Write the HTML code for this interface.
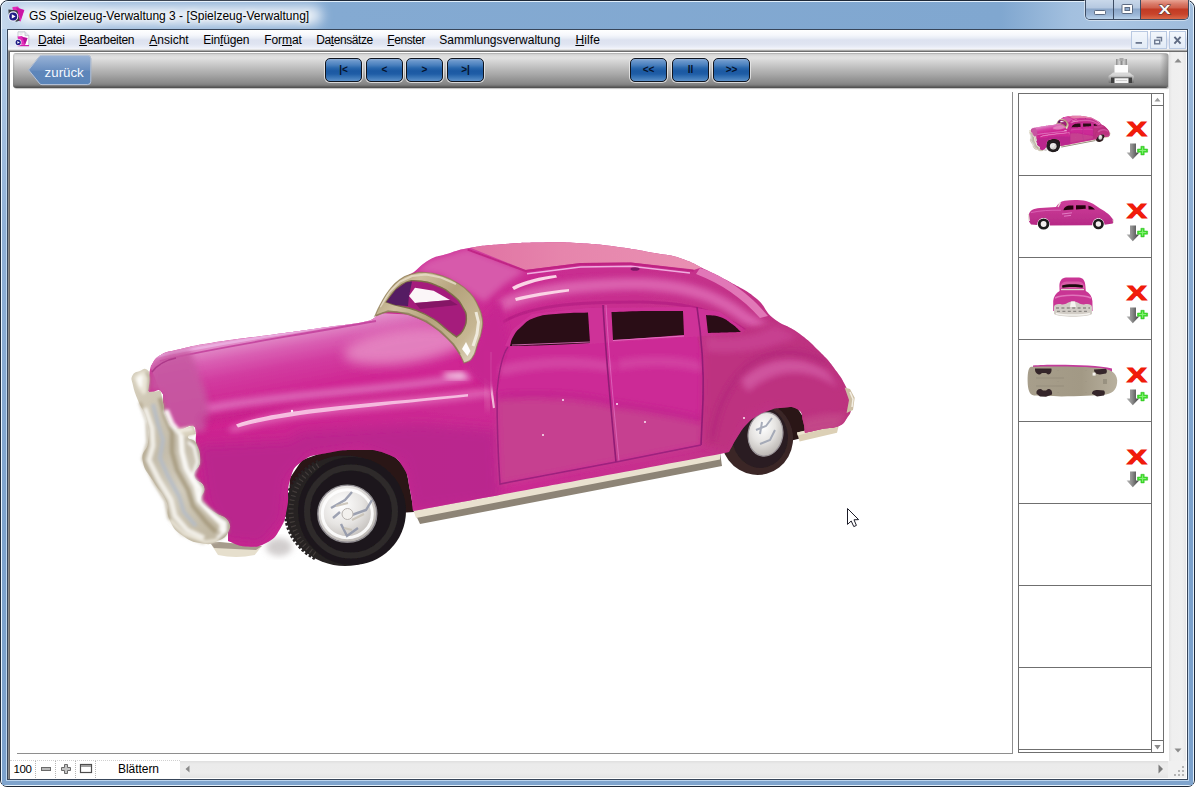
<!DOCTYPE html>
<html lang="de">
<head>
<meta charset="utf-8">
<title>GS Spielzeug-Verwaltung 3 - [Spielzeug-Verwaltung]</title>
<style>
html,body{margin:0;padding:0;}
body{width:1195px;height:787px;overflow:hidden;background:#fff;font-family:"Liberation Sans",sans-serif;font-size:12px;color:#000;position:relative;}
.a{position:absolute;box-sizing:border-box;}
/* ---------- window frame (page coordinates everywhere) ---------- */
#win{left:0;top:0;width:1195px;height:787px;border:1px solid #1d2838;border-radius:8px 8px 7px 7px;
 background:linear-gradient(90deg,#c6d9ed 0px,#adc7e3 30px,#93b4d9 110px,#84aad2 330px,#80a7d0 1000px,#a3c0df 1070px,#a8c4e2 1110px,#9fbcdc 1195px);}
#winhl{left:1px;top:1px;width:1193px;height:785px;border:1px solid rgba(235,246,255,.9);border-radius:7px 7px 6px 6px;}
#sideL{left:2px;top:29px;width:4px;height:752px;background:linear-gradient(180deg,#b4cde8,#8fb0d6 200px,#7da3cd 500px,#7ba1cc);}
#sideR{left:1189px;top:29px;width:4px;height:752px;background:linear-gradient(180deg,#9ebbdc,#86a9d1 250px,#7ba1cc 500px);}
#bottomF{left:2px;top:781px;width:1191px;height:4px;background:#7fa4cd;}
#hlL{left:6px;top:29px;width:1px;height:752px;background:#c0d8f0;}
#hlR{left:1188px;top:29px;width:1px;height:752px;background:#c0d8f0;}
#hlB{left:6px;top:780px;width:1183px;height:1px;background:#bcd5ee;}
#title{left:29px;top:7.5px;height:16px;line-height:16px;font-size:12px;white-space:nowrap;color:#000;
 text-shadow:0 0 4px rgba(255,255,255,.9),0 0 8px rgba(255,255,255,.7);}
#glow{left:16px;top:6px;width:306px;height:19px;border-radius:9px;background:rgba(255,255,255,.82);filter:blur(6px);}
/* caption buttons */
#cap{left:1085px;top:0;width:104px;height:20px;border:1px solid #3d4c63;border-top:none;border-radius:0 0 5px 5px;overflow:hidden;
 box-shadow:0 0 0 1px rgba(255,255,255,.45);}
#cap div{position:absolute;top:0;height:19px;box-sizing:border-box;}
#cmin{left:0;width:28px;border-right:1px solid #3d4c63;background:linear-gradient(180deg,#c9d8ea 0,#b5c8e0 8px,#8ba6c8 9px,#9db8d8 15px,#b9d2ea 19px);}
#cmax{left:28px;width:27px;border-right:1px solid #3d4c63;background:linear-gradient(180deg,#c9d8ea 0,#b5c8e0 8px,#8ba6c8 9px,#9db8d8 15px,#b9d2ea 19px);}
#ccls{left:55px;width:47px;background:linear-gradient(180deg,#e8a494 0,#d97a68 4px,#cf5f4b 8px,#c13a24 9px,#c8432a 14px,#d9694a 19px);}
/* client */
#client{left:7px;top:29px;width:1181px;height:751px;border:1px solid #38465a;background:#fff;}
#menubar{left:8px;top:30px;width:1179px;height:19px;background:linear-gradient(180deg,#ffffff 0px,#f6f8fc 5px,#e9edf6 8px,#dde2f0 10px,#dfe4f1 14px,#e9edf7 17px,#f4f6fb 19px);}
.mi{position:absolute;top:33px;height:15px;line-height:15px;font-size:12px;white-space:nowrap;color:#000;}
.mi u{text-decoration:underline;text-decoration-thickness:1px;text-underline-offset:1px;}
.mdib{position:absolute;top:31px;width:17px;height:18px;box-sizing:border-box;border:1px solid #b9c9e2;background:linear-gradient(180deg,#f3f7fc,#e2ebf7);}
/* mdi child sunken edge */
#l49{left:8px;top:49px;width:1179px;height:1px;background:#e3e3e3;}
#l50{left:8px;top:50px;width:1179px;height:1px;background:#a9a9a9;}
#l51{left:8px;top:51px;width:1179px;height:1px;background:#6d6d6d;}
#v8{left:8px;top:51px;width:1px;height:728px;background:#8c8c8c;}
#v9{left:9px;top:52px;width:1px;height:727px;background:#6d6d6d;}
/* toolbar */
#tb{left:13px;top:53px;width:1155px;height:35px;border-radius:3px 2px 2px 3px;
 background:linear-gradient(180deg,#9c9c9c 0px,#cfcfcf 1px,#dedede 3px,#e1e1e1 5px,#d2d2d2 9px,#bdbdbd 15px,#a9a9a9 21px,#979797 26px,#8a8a8a 30px,#7e7e7e 32px,#626262 33.5px,#4a4a4a 35px);
 box-shadow:1px 1px 1px rgba(0,0,0,.25);}
#tbl{left:13px;top:54px;width:12px;height:32px;background:linear-gradient(90deg,rgba(120,120,120,.35),rgba(200,200,200,.0) 2px);border-radius:3px 0 0 3px;}
#tbr{left:1160px;top:54px;width:8px;height:33px;background:linear-gradient(90deg,rgba(120,120,120,0),rgba(110,110,110,.55));}
.nb{position:absolute;top:58px;width:37px;height:24px;box-sizing:border-box;border:1px solid #10151f;border-radius:5px;
 background:linear-gradient(180deg,#8aabd4 0px,#6a97cc 2px,#4a80be 6px,#2a68ad 9px,#1b59a3 12px,#1f5da6 15px,#3f7aba 19px,#5d90c8 22px,#6a9ad0 24px);
 box-shadow:0 0 0 1px rgba(235,235,235,.8);color:#06122a;font-weight:bold;font-size:10px;text-align:center;line-height:21px;letter-spacing:0;}
</style>
</head>
<body>
<div id="win" class="a"></div><div id="winhl" class="a"></div>
<div id="sideL" class="a"></div><div id="sideR" class="a"></div><div id="bottomF" class="a"></div><div id="hlL" class="a"></div><div id="hlR" class="a"></div><div id="hlB" class="a"></div>
<div id="glow" class="a"></div>
<div id="title" class="a">GS Spielzeug-Verwaltung 3 - [Spielzeug-Verwaltung]</div>
<div id="cap" class="a"><div id="cmin"></div><div id="cmax"></div><div id="ccls"></div></div>
<div id="client" class="a"></div>
<div id="menubar" class="a"></div>
<span class="mi" style="left:38px;letter-spacing:-.28px"><u>D</u>atei</span>
<span class="mi" style="left:79.2px;letter-spacing:-.3px"><u>B</u>earbeiten</span>
<span class="mi" style="left:149.3px"><u>A</u>nsicht</span>
<span class="mi" style="left:203.2px;letter-spacing:-.17px">Ein<u>f</u>ügen</span>
<span class="mi" style="left:264.2px;letter-spacing:-.05px">For<u>m</u>at</span>
<span class="mi" style="left:316.3px;letter-spacing:-.42px">Da<u>t</u>ensätze</span>
<span class="mi" style="left:387.3px;letter-spacing:-.43px"><u>F</u>enster</span>
<span class="mi" style="left:439.3px;letter-spacing:-.02px">Sammlungsverwaltung</span>
<span class="mi" style="left:575.4px;letter-spacing:.12px"><u>H</u>ilfe</span>
<div class="mdib" style="left:1131px"></div><div class="mdib" style="left:1150px"></div><div class="mdib" style="left:1169px"></div>
<div id="l49" class="a"></div><div id="l50" class="a"></div><div id="l51" class="a"></div><div id="v8" class="a"></div><div id="v9" class="a"></div>
<div id="tb" class="a"></div><div id="tbl" class="a"></div><div id="tbr" class="a"></div>
<div class="nb" style="left:325px">|&lt;</div><div class="nb" style="left:366px">&lt;</div><div class="nb" style="left:406px">&gt;</div><div class="nb" style="left:447px">&gt;|</div>
<div class="nb" style="left:630px">&lt;&lt;</div><div class="nb" style="left:672px">ll</div><div class="nb" style="left:713px">&gt;&gt;</div>
<!-- zurück button -->
<svg class="a" style="left:24px;top:52px" width="74" height="38" viewBox="24 52 74 38">
 <defs>
  <linearGradient id="zg" x1="0" y1="0" x2="0" y2="1">
   <stop offset="0" stop-color="#9ab3d6"/><stop offset=".18" stop-color="#88a6cf"/><stop offset=".5" stop-color="#6a8fc0"/><stop offset=".55" stop-color="#5e86ba"/><stop offset="1" stop-color="#5a84b8"/>
  </linearGradient>
 </defs>
 <path d="M28.6 69.9 L39.6 56.3 Q40.6 55.4 42 55.4 L87.6 55.4 Q90.8 55.4 90.8 58.6 L90.8 81.4 Q90.8 84.6 87.6 84.6 L42 84.6 Q40.6 84.6 39.6 83.6 Z" fill="url(#zg)" stroke="#7d93b3" stroke-width="1"/>
 <path d="M28.6 69.9 L39.6 56.3 Q40.6 55.4 42 55.4 L87.6 55.4 Q90.8 55.4 90.8 58.6 L90.8 81.4 Q90.8 84.6 87.6 84.6 L42 84.6 Q40.6 84.6 39.6 83.6 Z" fill="none" stroke="rgba(230,235,245,.55)" stroke-width="1" transform="translate(0,0)" style="filter:blur(.6px)"/>
 <text x="44.6" y="76.9" font-family="Liberation Sans, sans-serif" font-size="13.3" fill="#f4f8ff">zurück</text>
</svg>
<!-- printer icon -->
<svg class="a" style="left:1106px;top:56px" width="32" height="30" viewBox="1106 56 32 30">
 <defs>
  <linearGradient id="pg1" x1="0" y1="0" x2="0" y2="1"><stop offset="0" stop-color="#c9c9c9"/><stop offset="1" stop-color="#6f6f6f"/></linearGradient>
  <linearGradient id="pg2" x1="0" y1="0" x2="1" y2="0"><stop offset="0" stop-color="#8d8d8d"/><stop offset=".3" stop-color="#d6d6d6"/><stop offset=".5" stop-color="#8d8d8d"/><stop offset=".7" stop-color="#d0d0d0"/><stop offset="1" stop-color="#8a8a8a"/></linearGradient>
 </defs>
 <rect x="1116" y="59" width="11" height="8" fill="url(#pg2)"/>
 <rect x="1119.5" y="58" width="4" height="3" fill="#a8a8a8"/>
 <rect x="1114.5" y="65" width="13.5" height="8" fill="#fdfdfd"/>
 <path d="M1113 72.5 L1129.5 72.5 L1133.5 76 L1109 76 Z" fill="#d8d8d8"/>
 <rect x="1108.5" y="75.5" width="25.5" height="7.5" rx="1" fill="url(#pg1)"/>
 <rect x="1111" y="77.5" width="21" height="5.5" fill="#3e3e3e"/>
 <rect x="1114.5" y="78.2" width="14" height="4.8" fill="#f4f4f4"/>
 <rect x="1116" y="80" width="11" height="1" fill="#cfcfcf"/>
</svg>

<!-- content area separators -->
<div class="a" style="left:1012px;top:92px;width:1px;height:662px;background:#8e8e8e"></div>
<div class="a" style="left:17px;top:753px;width:996px;height:1px;background:#8e8e8e"></div>
<!-- outer vertical scrollbar -->
<div class="a" style="left:1169px;top:52px;width:17px;height:709px;background:linear-gradient(90deg,#e4e4e4,#efefef 3px,#f0f0f0 13px,#e6e6e6)"></div>
<svg class="a" style="left:1169px;top:52px" width="18" height="709" viewBox="0 0 18 709">
 <path d="M5.5 10.5 L9 6.5 L12.5 10.5 Z" fill="#8c8c8c"/>
 <path d="M5.5 696.5 L9 700.5 L12.5 696.5 Z" fill="#8c8c8c"/>
</svg>
<!-- right thumbnail panel -->
<div class="a" style="left:1018px;top:93px;width:146px;height:660px;border:1px solid #6f6f6f;background:#fff"></div>
<div class="a" style="left:1151px;top:94px;width:1px;height:658px;background:#6f6f6f"></div>
<div class="a" style="left:1152px;top:105px;width:11px;height:1px;background:#6f6f6f"></div>
<div class="a" style="left:1152px;top:740px;width:11px;height:1px;background:#6f6f6f"></div>
<svg class="a" style="left:1152px;top:94px" width="11" height="658" viewBox="0 0 11 658">
 <path d="M2.5 7.5 L5.5 3.8 L8.5 7.5 Z" fill="#9a9a9a"/>
 <path d="M2.3 651 L5.5 655.5 L8.7 651 Z" fill="#8a8a8a"/>
</svg>
<div class="a" style="left:1019px;top:175px;width:132px;height:1px;background:#6f6f6f"></div>
<div class="a" style="left:1019px;top:257px;width:132px;height:1px;background:#6f6f6f"></div>
<div class="a" style="left:1019px;top:339px;width:132px;height:1px;background:#6f6f6f"></div>
<div class="a" style="left:1019px;top:421px;width:132px;height:1px;background:#6f6f6f"></div>
<div class="a" style="left:1019px;top:503px;width:132px;height:1px;background:#6f6f6f"></div>
<div class="a" style="left:1019px;top:585px;width:132px;height:1px;background:#6f6f6f"></div>
<div class="a" style="left:1019px;top:667px;width:132px;height:1px;background:#6f6f6f"></div>
<div class="a" style="left:1019px;top:749px;width:132px;height:1px;background:#6f6f6f"></div>
<!-- status bar -->
<div class="a" style="left:10px;top:761px;width:170px;height:17px;background:#fff"></div>
<div class="a" style="left:35px;top:761px;width:0;height:17px;border-left:1px dotted #b5b5b5"></div>
<div class="a" style="left:55px;top:761px;width:0;height:17px;border-left:1px dotted #b5b5b5"></div>
<div class="a" style="left:75px;top:761px;width:0;height:17px;border-left:1px dotted #b5b5b5"></div>
<div class="a" style="left:95px;top:761px;width:0;height:17px;border-left:1px dotted #b5b5b5"></div>
<div class="a" style="left:10px;top:760px;width:170px;height:0;border-top:1px dotted #d0d0d0"></div>
<span class="a" style="left:13.4px;top:762px;height:15px;line-height:15px;font-size:11.5px;letter-spacing:-.3px">100</span>
<span class="a" style="left:118px;top:762px;height:15px;line-height:15px;font-size:12px;letter-spacing:-.05px;white-space:nowrap">Blättern</span>
<svg class="a" style="left:36px;top:761px" width="60" height="17" viewBox="36 761 60 17">
 <rect x="41.5" y="767.5" width="9" height="3" fill="#b9b9b9" stroke="#6a6a6a" stroke-width="1"/>
 <path d="M64.5 764.5 h3 v3 h3 v3 h-3 v3 h-3 v-3 h-3 v-3 h3 z" fill="#c4c4c4" stroke="#6a6a6a" stroke-width="1"/>
 <rect x="80.5" y="764.5" width="11" height="8" fill="#fff" stroke="#4c4c4c" stroke-width="1.2"/>
 <rect x="81" y="765" width="10" height="2" fill="#a0a0a0"/>
</svg>
<!-- horizontal scrollbar -->
<div class="a" style="left:180px;top:761px;width:988px;height:17px;background:linear-gradient(180deg,#dfdfdf,#ebebeb 3px,#ececec 12px,#e4e4e4)"></div>
<svg class="a" style="left:180px;top:761px" width="988" height="17" viewBox="0 0 988 17">
 <path d="M9.5 4.5 L5.5 8 L9.5 11.5 Z" fill="#8a8a8a"/>
 <path d="M978.5 3.5 L983 8 L978.5 12.5 Z" fill="#7a7a7a"/>
</svg>
<!-- size grip -->
<div class="a" style="left:1168px;top:761px;width:18px;height:17px;background:#f0f0f0"></div>
<svg class="a" style="left:1168px;top:761px" width="19" height="17" viewBox="0 0 19 17">
 <g fill="#b4b4b4"><rect x="14" y="5" width="2" height="2"/><rect x="14" y="9" width="2" height="2"/><rect x="10" y="9" width="2" height="2"/><rect x="14" y="13" width="2" height="2"/><rect x="10" y="13" width="2" height="2"/><rect x="6" y="13" width="2" height="2"/></g>
</svg>

<svg class="a" style="left:10px;top:88px" width="1002" height="665" viewBox="10 88 1002 665">
<defs>
<linearGradient id="bodyG" gradientUnits="userSpaceOnUse" x1="150" y1="0" x2="850" y2="0"><stop offset="0" stop-color="#cd2390"/><stop offset=".45" stop-color="#cc2a94"/><stop offset=".75" stop-color="#c6308d"/><stop offset="1" stop-color="#bb357e"/></linearGradient>
<linearGradient id="hoodG" gradientUnits="userSpaceOnUse" x1="300" y1="326" x2="316" y2="412"><stop offset="0" stop-color="#e5a0d2"/><stop offset=".07" stop-color="#e188c6"/><stop offset=".22" stop-color="#d95eb2"/><stop offset=".42" stop-color="#d23ca0"/><stop offset=".7" stop-color="#cf2894"/><stop offset="1" stop-color="#d02290"/></linearGradient>
<linearGradient id="roofG" gradientUnits="userSpaceOnUse" x1="470" y1="0" x2="700" y2="0"><stop offset="0" stop-color="#e072a3"/><stop offset=".4" stop-color="#e685ac"/><stop offset="1" stop-color="#e990b2"/></linearGradient>
<linearGradient id="chromeG" gradientUnits="userSpaceOnUse" x1="130" y1="380" x2="225" y2="520"><stop offset="0" stop-color="#d6cfbd"/><stop offset=".2" stop-color="#cfc7b4"/><stop offset=".45" stop-color="#c4bcaa"/><stop offset=".7" stop-color="#d2ccbd"/><stop offset="1" stop-color="#c2b9a4"/></linearGradient>
<radialGradient id="hubG" cx=".4" cy=".35" r=".7"><stop offset="0" stop-color="#ffffff"/><stop offset=".5" stop-color="#e6e4e2"/><stop offset="1" stop-color="#b7b2ae"/></radialGradient>
<clipPath id="bodyClip"><path d="M151.0 366.0 C153.6 362.7 153.6 359.5 159.0 356.0 C166.6 351.1 167.2 352.1 176.0 350.0 C196.3 345.2 197.9 345.0 220.0 341.5 C244.9 337.5 245.0 338.4 270.0 335.0 C295.0 331.6 295.0 331.6 320.0 328.0 C344.0 324.6 348.7 325.3 368.0 321.0 C373.7 319.7 374.7 317.0 378.0 315.0 C381.0 308.4 380.7 304.0 387.0 295.0 C393.5 285.7 394.4 286.3 403.0 279.0 C408.0 274.8 410.4 274.3 414.0 272.0 C419.3 267.9 421.2 264.6 430.0 259.6 C436.9 255.7 437.4 256.9 445.0 254.6 C456.3 251.2 456.1 250.3 467.7 248.3 C486.2 245.0 486.3 245.4 505.0 244.0 C524.0 242.5 524.0 242.7 543.0 242.5 C561.8 242.3 561.8 242.2 580.6 243.3 C599.4 244.4 599.4 244.5 618.0 247.0 C637.1 249.5 637.0 249.9 656.0 253.3 C668.6 255.6 668.9 254.4 681.0 258.4 C694.0 262.7 693.6 263.7 706.0 269.7 C718.1 275.6 718.3 275.3 730.0 282.0 C743.8 289.9 744.8 288.8 757.0 299.0 C766.5 307.0 763.4 310.1 773.0 318.0 C783.7 326.8 785.7 323.9 797.0 332.0 C809.3 340.9 809.2 341.2 820.0 352.0 C829.3 361.3 829.3 361.4 837.0 372.0 C842.8 380.0 842.7 380.3 847.0 389.0 C849.1 393.2 849.1 393.3 850.0 398.0 C851.1 403.9 851.9 404.0 851.0 410.0 C850.3 414.4 849.6 414.4 847.0 418.0 C844.0 422.2 844.7 423.4 840.0 425.5 C831.7 429.2 831.0 427.1 822.0 429.0 C813.5 430.8 810.6 431.7 805.0 433.0 C804.3 429.0 804.7 426.8 803.0 421.0 C801.2 415.0 803.5 412.6 798.0 409.5 C790.3 405.2 789.0 407.5 780.0 408.0 C773.8 408.3 773.8 409.0 768.0 411.0 C762.3 413.0 762.1 412.8 757.0 416.0 C751.6 419.4 751.4 419.4 747.0 424.0 C741.8 429.4 742.1 429.7 738.0 436.0 C733.0 443.7 732.0 446.7 729.0 452.0 C726.0 452.7 723.0 453.3 720.0 454.0 C685.7 460.4 668.0 463.8 616.0 473.5 C567.0 482.6 567.0 482.4 518.0 491.5 C465.5 501.2 447.6 504.6 413.0 511.0 C412.0 504.1 412.4 500.3 410.0 490.0 C407.3 478.3 409.5 477.1 403.0 467.0 C397.5 458.3 396.6 457.8 387.0 454.0 C374.3 449.0 373.6 450.2 360.0 450.0 C343.4 449.7 343.2 449.7 327.0 453.0 C313.5 455.7 312.1 453.9 301.0 462.0 C292.5 468.2 293.1 469.9 290.0 480.0 C285.9 493.5 289.8 494.2 287.0 508.0 C284.8 518.8 285.7 519.5 280.0 529.0 C274.9 537.5 274.8 538.5 266.0 543.0 C257.0 547.6 256.1 547.0 246.0 546.5 C236.6 546.0 233.9 542.8 228.0 541.0 C228.0 538.0 228.0 536.5 228.0 532.0 C228.0 526.5 231.1 525.5 228.0 521.0 C223.7 514.7 221.1 517.5 215.0 513.0 C207.6 507.5 204.6 509.5 201.0 501.0 C198.2 494.4 205.9 493.9 204.0 487.0 C202.0 479.8 195.2 483.3 194.0 476.0 C192.8 468.5 199.5 469.6 200.0 462.0 C200.6 452.3 197.3 452.3 196.0 443.0 C195.4 438.5 196.0 437.0 196.0 434.0 C195.0 431.4 197.1 427.1 193.0 426.0 C186.3 424.2 183.9 431.9 176.0 428.5 C167.6 424.9 169.1 422.1 165.0 414.0 C162.7 409.5 164.5 409.0 163.5 404.0 C162.2 397.5 165.3 395.0 160.5 391.0 C156.1 387.3 152.7 396.5 149.0 392.0 C145.2 387.3 148.4 384.5 149.0 377.0 C149.4 371.4 150.3 369.6 151.0 366.0Z"/></clipPath>
<filter id="b1" x="-5%" y="-5%" width="110%" height="110%"><feGaussianBlur stdDeviation="0.7"/></filter>
<filter id="b2" x="-10%" y="-10%" width="120%" height="120%"><feGaussianBlur stdDeviation="1.5"/></filter>
<filter id="b3" x="-20%" y="-20%" width="140%" height="140%"><feGaussianBlur stdDeviation="3"/></filter>
<filter id="b6" x="-30%" y="-30%" width="160%" height="160%"><feGaussianBlur stdDeviation="6"/></filter>
<filter id="b10" x="-40%" y="-40%" width="180%" height="180%"><feGaussianBlur stdDeviation="10"/></filter>
</defs>
<g id="car" filter="url(#b1)">
<path d="M288 520 L290 478 L302 460 L330 450 L362 448 L390 452 L406 468 L414 512 Z" fill="#2a1418"/>
<path d="M728 456 L738 432 L750 416 L770 406 L796 406 L805 420 L806 437 Z" fill="#2a1418"/>
<path d="M413 509 L720 452 L722 466 L420 524 Z" fill="#8d8476"/>
<path d="M413 509 L720 452 L720 459.5 L416 518 Z" fill="#e9e1cf"/>
<path d="M797 432.6 L839.6 422.4 L837 432.8 L799.6 441.4 Z" fill="#dcd0b6"/>
<path d="M797 432.6 L839.6 422.4 L839 425 L797.6 435.4 Z" fill="#ece4d0"/>
<path d="M209 541 L218 555 Q236 559 254.7 555 L262 546 Z" fill="#e6dfcd"/>
<path d="M209 541 L262 546 L256 550 L214 548 Z" fill="#8a7d70" opacity=".7"/>
<ellipse cx="757" cy="438" rx="36" ry="37" fill="#3a2828" transform="rotate(-15 757 438)"/>
<ellipse cx="760" cy="437" rx="28" ry="31" fill="#2c1e20" transform="rotate(-5 760 437)"/>
<ellipse cx="765.5" cy="434.2" rx="17.3" ry="22" fill="url(#hubG)" transform="rotate(10 765.5 434.2)"/>
<ellipse cx="765.5" cy="434.2" rx="17.3" ry="22" fill="none" stroke="#9a949a" stroke-width="1.2" transform="rotate(10 765.5 434.2)"/>
<path d="M756 430 L766 426 L772 418 M760 444 L770 440 L775 430 M762 422 L760 434" stroke="#9aa0b0" stroke-width="2" fill="none" opacity=".85" filter="url(#b1)"/>
<ellipse cx="279" cy="547" rx="13" ry="9" fill="#a39b9b" filter="url(#b3)" opacity=".5"/>
<ellipse cx="345" cy="510.7" rx="59.5" ry="55.2" fill="#262123"/>
<path d="M315.2 558.3 L310.7 555.6 L306.4 552.6 L302.5 549.2 L298.9 545.4 L295.6 541.4 L292.8 537.2 L290.5 532.7 L288.5 528.0 L287.1 523.2 L286.1 518.3 L285.6 513.3 L285.6 508.3 L286.0 503.3 L287.0 498.4 L288.5 493.6 L290.4 488.9 L292.7 484.4 L295.5 480.1 L298.7 476.1 L302.3 472.4 L306.3 469.0 L310.5 465.9 L315.1 463.2 L319.9 460.9" stroke="#262123" stroke-width="4" stroke-dasharray="2.6 1.8" fill="none"/>
<path d="M314.9 554.1 L311.2 551.4 L307.7 548.4 L304.5 545.2 L301.6 541.7 L299.0 538.0 L296.8 534.1 L294.9 530.1 L293.4 525.9 L292.2 521.6 L291.4 517.2 L291.0 512.8 L291.1 508.4 L291.5 504.0 L292.2 499.6 L293.4 495.3 L295.0 491.1 L296.9 487.1 L299.1 483.2 L301.7 479.5 L304.6 476.0 L307.8 472.8 L311.3 469.9 L315.0 467.2 L319.0 464.8" stroke="#48423f" stroke-width="5" stroke-dasharray="1.2 3.2" fill="none" opacity=".8"/>
<ellipse cx="352" cy="511" rx="54" ry="54" fill="#1d191b"/>
<ellipse cx="351" cy="511.5" rx="44" ry="44" fill="none" stroke="#343032" stroke-width="6" opacity=".7" filter="url(#b1)"/>
<ellipse cx="347.3" cy="513.7" rx="29.5" ry="28.6" fill="url(#hubG)"/>
<ellipse cx="347.3" cy="513.7" rx="29.5" ry="28.6" fill="none" stroke="#8e8a90" stroke-width="1.4"/>
<ellipse cx="347.3" cy="513.7" rx="25" ry="24" fill="none" stroke="#ffffff" stroke-width="3" opacity=".9" filter="url(#b1)"/>
<path d="M331 508 L345 500 L352 492 M349 516 L366 510 L372 500 M341 524 L347 536 L358 528 M333 518 L340 512" stroke="#8f95a8" stroke-width="2.4" fill="none" opacity=".85" filter="url(#b1)"/>
<path d="M336 506 L348 503 M352 520 L364 514 M344 528 L352 530" stroke="#c9c2b6" stroke-width="2" fill="none" opacity=".9"/>
<circle cx="347.5" cy="514" r="5.5" fill="#f3f1ee" stroke="#b9b4b0" stroke-width="1"/>
<path d="M151.0 366.0 C153.6 362.7 153.6 359.5 159.0 356.0 C166.6 351.1 167.2 352.1 176.0 350.0 C196.3 345.2 197.9 345.0 220.0 341.5 C244.9 337.5 245.0 338.4 270.0 335.0 C295.0 331.6 295.0 331.6 320.0 328.0 C344.0 324.6 348.7 325.3 368.0 321.0 C373.7 319.7 374.7 317.0 378.0 315.0 C381.0 308.4 380.7 304.0 387.0 295.0 C393.5 285.7 394.4 286.3 403.0 279.0 C408.0 274.8 410.4 274.3 414.0 272.0 C419.3 267.9 421.2 264.6 430.0 259.6 C436.9 255.7 437.4 256.9 445.0 254.6 C456.3 251.2 456.1 250.3 467.7 248.3 C486.2 245.0 486.3 245.4 505.0 244.0 C524.0 242.5 524.0 242.7 543.0 242.5 C561.8 242.3 561.8 242.2 580.6 243.3 C599.4 244.4 599.4 244.5 618.0 247.0 C637.1 249.5 637.0 249.9 656.0 253.3 C668.6 255.6 668.9 254.4 681.0 258.4 C694.0 262.7 693.6 263.7 706.0 269.7 C718.1 275.6 718.3 275.3 730.0 282.0 C743.8 289.9 744.8 288.8 757.0 299.0 C766.5 307.0 763.4 310.1 773.0 318.0 C783.7 326.8 785.7 323.9 797.0 332.0 C809.3 340.9 809.2 341.2 820.0 352.0 C829.3 361.3 829.3 361.4 837.0 372.0 C842.8 380.0 842.7 380.3 847.0 389.0 C849.1 393.2 849.1 393.3 850.0 398.0 C851.1 403.9 851.9 404.0 851.0 410.0 C850.3 414.4 849.6 414.4 847.0 418.0 C844.0 422.2 844.7 423.4 840.0 425.5 C831.7 429.2 831.0 427.1 822.0 429.0 C813.5 430.8 810.6 431.7 805.0 433.0 C804.3 429.0 804.7 426.8 803.0 421.0 C801.2 415.0 803.5 412.6 798.0 409.5 C790.3 405.2 789.0 407.5 780.0 408.0 C773.8 408.3 773.8 409.0 768.0 411.0 C762.3 413.0 762.1 412.8 757.0 416.0 C751.6 419.4 751.4 419.4 747.0 424.0 C741.8 429.4 742.1 429.7 738.0 436.0 C733.0 443.7 732.0 446.7 729.0 452.0 C726.0 452.7 723.0 453.3 720.0 454.0 C685.7 460.4 668.0 463.8 616.0 473.5 C567.0 482.6 567.0 482.4 518.0 491.5 C465.5 501.2 447.6 504.6 413.0 511.0 C412.0 504.1 412.4 500.3 410.0 490.0 C407.3 478.3 409.5 477.1 403.0 467.0 C397.5 458.3 396.6 457.8 387.0 454.0 C374.3 449.0 373.6 450.2 360.0 450.0 C343.4 449.7 343.2 449.7 327.0 453.0 C313.5 455.7 312.1 453.9 301.0 462.0 C292.5 468.2 293.1 469.9 290.0 480.0 C285.9 493.5 289.8 494.2 287.0 508.0 C284.8 518.8 285.7 519.5 280.0 529.0 C274.9 537.5 274.8 538.5 266.0 543.0 C257.0 547.6 256.1 547.0 246.0 546.5 C236.6 546.0 233.9 542.8 228.0 541.0 C228.0 538.0 228.0 536.5 228.0 532.0 C228.0 526.5 231.1 525.5 228.0 521.0 C223.7 514.7 221.1 517.5 215.0 513.0 C207.6 507.5 204.6 509.5 201.0 501.0 C198.2 494.4 205.9 493.9 204.0 487.0 C202.0 479.8 195.2 483.3 194.0 476.0 C192.8 468.5 199.5 469.6 200.0 462.0 C200.6 452.3 197.3 452.3 196.0 443.0 C195.4 438.5 196.0 437.0 196.0 434.0 C195.0 431.4 197.1 427.1 193.0 426.0 C186.3 424.2 183.9 431.9 176.0 428.5 C167.6 424.9 169.1 422.1 165.0 414.0 C162.7 409.5 164.5 409.0 163.5 404.0 C162.2 397.5 165.3 395.0 160.5 391.0 C156.1 387.3 152.7 396.5 149.0 392.0 C145.2 387.3 148.4 384.5 149.0 377.0 C149.4 371.4 150.3 369.6 151.0 366.0Z" fill="url(#bodyG)"/>
<g clip-path="url(#bodyClip)">
<path d="M414 272 L430 259.6 L467.7 248.3 L525.4 271 L505 284 L484 302 L470 293 L441 275.6 Z" fill="#d75aab" filter="url(#b3)"/>
<path d="M466 246 L505 240 L543 238.5 L580.6 239.3 L618 243 L656 249.3 L683 255.4 L706 266 L693.6 270 L630.9 262.6 L580.6 263 L525.4 270 Z" fill="url(#roofG)" filter="url(#b1)"/>
<path d="M467.7 249.6 L525.4 271 L580.6 264 L630.9 263.4 L693.6 270.5" stroke="#be2080" stroke-width="2" fill="none" opacity=".85" filter="url(#b1)"/>
<path d="M527 273.8 L580.6 267 L630.9 266.3 L690 273" stroke="#f3b4e4" stroke-width="1.4" fill="none" opacity=".95" filter="url(#b1)"/>
<path d="M498 300 C530 284 580 278 640 278 C690 279 722 292 750 314 C770 326 790 332 800 340 L792 346 C775 336 760 332 742 322 C715 302 688 292 640 290 C585 290 535 296 503 312 Z" fill="#dd68b2" filter="url(#b3)" opacity=".9"/>
<path d="M700 268 C725 276 750 294 768 316 L760 318 C742 298 722 284 696 274 Z" fill="#e580bd" filter="url(#b1)" opacity=".9"/>
<path d="M512 287 C525 280 540 277 556 275 L557 277.5 C542 280 528 283 514 290 Z" fill="#fbd3e6" filter="url(#b1)"/>
<path d="M515 298 C530 294 548 291 569 289 L569 291.5 C550 294 532 297 516 301 Z" fill="#fbd3e6" filter="url(#b1)"/>
<path d="M503 322 C530 306 570 302 640 302 C690 303 715 310 745 330" stroke="#b31f82" stroke-width="3" fill="none" opacity=".7" filter="url(#b1)"/>
<path d="M150 366 L157 353 L176 346 L220 337.5 L270 331 L320 324 L368 317 L378 313 L407.7 314.5 L426 322 L441 332.7 L453.4 345 L464 363 L478 380 L492 391 C440 397 390 402 340 407 C295 413 255 421 232 426 L196 432 L176 428.5 L165 414 L160.5 391 Z" fill="url(#hoodG)" filter="url(#b1)"/>
<ellipse cx="405" cy="346" rx="62" ry="17" fill="#e68cc4" filter="url(#b6)" opacity=".85" transform="rotate(-8 405 346)"/>
<path d="M160 361 C200 350 270 340 376 321" stroke="#c03a99" stroke-width="1.8" fill="none" opacity=".8" filter="url(#b1)"/>
<path d="M157 356.5 C200 346 270 336.5 372 319" stroke="#ebb0e1" stroke-width="2.4" fill="none" opacity=".9" filter="url(#b1)"/>
<path d="M150 368 L156 360 L170 353 L190 350 L197 368 L206 393 L210 412 L204 432 L176 428.5 L165 414 L160.5 391 L149 392 Z" fill="#c658a1" filter="url(#b3)" opacity=".9"/>
<path d="M152 372 C158 364 166 360 176 358" stroke="#a02a7e" stroke-width="1.6" fill="none" opacity=".7" filter="url(#b1)"/>
<path d="M206 404 C250 396 300 392 350 387 C400 382 440 378 470 372 L474 380 C440 386 400 390 350 395 C300 400 250 405 210 413 Z" fill="#df77c0" filter="url(#b3)" opacity=".8"/>
<path d="M200 418 C250 408 300 403 350 398 C400 393 450 388 488 384 L490 389 C450 393 400 398 350 403 C300 408 250 414 204 424 Z" fill="#c02088" filter="url(#b3)" opacity=".55"/>
<path d="M236 424.5 C255 417 295 410.5 340 406 C390 401 430 398 468 394 L468 396.5 C430 400.5 390 404.5 340 410 C296 415 258 421 238 427.5 Z" fill="#fde4f0" filter="url(#b1)"/>
<path d="M491 352 C490 370 491 390 494 408" stroke="#fbd6e8" stroke-width="2.2" fill="none" opacity=".9" filter="url(#b1)"/>
<path d="M486 350 C485 370 486 390 489 410" stroke="#e070b0" stroke-width="5" fill="none" opacity=".6" filter="url(#b3)"/>
<path d="M228 428 C255 416 295 408 340 403 C390 398 440 394 492 387 L492 396 C440 403 390 408 340 413 C296 418 258 424 232 433 Z" fill="#ed8ccc" filter="url(#b3)" opacity=".55"/>
<path d="M442 373 L464 372 L466 379 L447 378 Z" fill="#fff" filter="url(#b3)" opacity=".75"/>
<path d="M197 445 L290 440 L300 432 L420 424 L497 430 L500 500 L413 512 L402 462 L360 448 L310 455 L288 480 L284 520 L262 546 L225 542 L205 500 Z" fill="#b6288d" filter="url(#b6)" opacity=".8"/>
<path d="M464 363 L476 342 L484 318 L500 300 L510 346 L497 392 L480 384 Z" fill="#c62591" filter="url(#b3)" opacity=".9"/>
<path d="M497 392 L500 484 L614 462 L702 445 L704 368 L697 336 L603 341 L510 347 Z" fill="#cc2a96" filter="url(#b1)"/>
<path d="M497 400 C540 396 590 400 616 408 C650 412 680 418 703 424 L702 445 L614 462 L500 484 Z" fill="#c64190" filter="url(#b3)"/>
<path d="M497 396 C540 391 590 396 616 404 C650 409 680 414 703 420" stroke="#ae2080" stroke-width="3" fill="none" opacity=".55" filter="url(#b3)"/>
<path d="M500 365 C540 356 580 356 612 362 L612 372 C580 366 540 366 500 376 Z" fill="#d95aad" filter="url(#b3)" opacity=".6"/>
<path d="M618 360 C650 354 680 356 702 362 L702 372 C680 366 650 364 618 370 Z" fill="#d95aad" filter="url(#b3)" opacity=".5"/>
<path d="M505 346 L512 330 L532 314 L588 308 L690 307 L720 312 L745 330 L741 336 L706 336 L590 344 Z" fill="#cf3499" filter="url(#b1)" opacity=".9"/>
<path d="M704 336 L745 330 L773 320 L797 332 L820 352 L837 372 L850 398 L846 420 L838 431 L803 436 L800 421 L793 409 L770 405 L748 414 L738 433 L729 452 L702 445 Z" fill="#bd3380" filter="url(#b3)" opacity=".95"/>
<path d="M740 380 C765 356 800 352 828 372 L838 388 C808 366 775 368 748 392 Z" fill="#d25aa3" filter="url(#b3)" opacity=".85"/>
<path d="M712 440 C716 410 728 384 748 366 C770 350 800 348 826 362" stroke="#a32476" stroke-width="3" fill="none" opacity=".6" filter="url(#b3)"/>
<path d="M705 336 C730 340 755 336 775 326 L797 336 C770 350 740 354 706 352 Z" fill="#c94494" filter="url(#b3)" opacity=".8"/>
<path d="M800 420 C815 414 830 412 846 414 L838 431 L803 436 Z" fill="#c44c8a" filter="url(#b3)" opacity=".8"/>
</g>
<path d="M603 305 C606 360 612 420 616 462" stroke="#901c75" stroke-width="1.6" fill="none"/>
<path d="M606 305 C609 360 615 420 619 461" stroke="#e372c4" stroke-width="1" fill="none" opacity=".7"/>
<path d="M697 307 C702 340 704 370 703 400 L701 445" stroke="#901c75" stroke-width="1.6" fill="none"/>
<path d="M497 392 C497 420 498 455 500 484 L616 462 L701 445" stroke="#9c207e" stroke-width="1.5" fill="none"/>
<path d="M497 392 C499 370 502 355 508 347" stroke="#9c207e" stroke-width="1.3" fill="none"/>
<path d="M510.0 346.0 C511.0 343.0 510.6 341.1 513.0 337.0 C516.2 331.5 516.3 331.3 521.0 327.0 C526.9 321.7 526.6 320.8 534.0 318.0 C544.5 314.1 544.9 315.1 556.0 314.0 C571.9 312.4 577.4 313.0 588.0 312.5 C588.7 322.6 589.3 332.9 590.0 343.0 C576.8 343.7 570.0 344.2 550.0 345.0 C530.0 345.7 523.2 345.7 510.0 346.0Z" fill="#2a0714"/>
<path d="M611.5 312.0 C623.5 311.7 629.7 311.3 648.0 311.0 C665.5 310.8 671.5 311.0 683.0 311.0 C683.3 318.9 683.7 327.1 684.0 335.0 C672.8 335.8 667.0 336.3 650.0 337.5 C631.5 338.8 625.2 339.2 613.0 340.0 C612.5 330.8 612.0 321.2 611.5 312.0Z" fill="#2a0714"/>
<path d="M706.0 315.0 C710.6 315.7 713.3 314.7 720.0 317.0 C726.6 319.3 726.3 320.0 732.0 324.0 C736.9 327.5 738.0 329.4 741.0 332.0 C735.4 332.2 732.5 332.2 724.0 332.5 C716.0 332.7 713.3 332.8 708.0 333.0 C707.3 327.1 706.7 320.9 706.0 315.0Z" fill="#2a0714"/>
<path d="M512 345 L590 342" stroke="#e97ecb" stroke-width="1.2" opacity=".8"/>
<path d="M613 340.5 L684 336" stroke="#e97ecb" stroke-width="1.2" opacity=".8"/>
<linearGradient id="wsG" gradientUnits="userSpaceOnUse" x1="380" y1="275" x2="480" y2="360"><stop offset="0" stop-color="#a99770"/><stop offset=".25" stop-color="#cfc09e"/><stop offset=".5" stop-color="#b5a37c"/><stop offset=".8" stop-color="#c6b692"/><stop offset="1" stop-color="#e4dccb"/></linearGradient>
<path d="M374.9 316.0 C376.6 312.5 377.1 310.5 380.0 305.3 C384.4 297.5 383.9 297.1 389.4 290.0 C394.0 284.1 393.9 283.7 400.0 279.4 C405.4 275.6 405.6 275.7 412.0 274.0 C418.8 272.2 419.0 272.1 426.0 272.5 C433.6 272.9 433.7 273.2 441.0 275.6 C449.0 278.2 449.2 278.0 456.5 282.4 C463.9 286.8 464.2 286.7 470.0 293.0 C475.0 298.3 474.7 298.7 477.8 305.3 C480.9 311.8 481.3 311.9 482.4 319.0 C483.3 324.9 482.7 325.1 481.6 331.0 C480.4 337.4 480.0 337.3 477.8 343.4 C475.0 351.2 476.3 352.2 471.7 358.7 C469.2 362.3 466.5 361.6 464.0 363.0 C462.5 360.0 462.1 358.3 459.5 354.0 C456.7 349.3 457.0 349.1 453.4 345.0 C447.7 338.4 447.7 338.3 441.0 332.7 C433.9 326.8 434.1 326.4 426.0 322.0 C417.3 317.3 417.3 317.0 407.7 314.5 C398.1 312.0 397.9 311.5 388.0 312.0 C381.2 312.3 379.2 314.7 374.9 316.0Z" fill="url(#wsG)"/>
<path d="M376 315.5 L388 311 L408 313.5 L426 321 L441 331.5 L453.4 344 L460 354" stroke="#8f7f5f" stroke-width="1.6" fill="none" opacity=".8"/>
<path d="M380 307 L389.4 292 L400 281.5 L412 276 L426 274.5 L441 277.5 L456 284" stroke="#e9dfc9" stroke-width="2" fill="none" opacity=".8"/>
<path d="M374.9 316.0 C376.6 312.5 377.1 310.5 380.0 305.3 C384.4 297.5 383.9 297.1 389.4 290.0 C394.0 284.1 393.9 283.7 400.0 279.4 C405.4 275.6 405.6 275.7 412.0 274.0 C418.8 272.2 419.0 272.1 426.0 272.5 C433.6 272.9 433.7 273.2 441.0 275.6 C449.0 278.2 449.2 278.0 456.5 282.4 C463.9 286.8 464.2 286.7 470.0 293.0 C475.0 298.3 474.7 298.7 477.8 305.3 C480.9 311.8 481.3 311.9 482.4 319.0 C483.3 324.9 482.7 325.1 481.6 331.0 C480.4 337.4 480.0 337.3 477.8 343.4 C475.0 351.2 476.3 352.2 471.7 358.7 C469.2 362.3 466.5 361.6 464.0 363.0 C462.5 360.0 462.1 358.3 459.5 354.0 C456.7 349.3 457.0 349.1 453.4 345.0 C447.7 338.4 447.7 338.3 441.0 332.7 C433.9 326.8 434.1 326.4 426.0 322.0 C417.3 317.3 417.3 317.0 407.7 314.5 C398.1 312.0 397.9 311.5 388.0 312.0 C381.2 312.3 379.2 314.7 374.9 316.0Z" fill="none" stroke="#8a7850" stroke-width="1.2" opacity=".7"/>
<path d="M386.3 302.0 C389.3 298.0 390.1 295.3 395.5 290.0 C400.1 285.4 400.0 284.8 406.0 282.4 C411.8 280.1 412.2 280.4 418.4 281.0 C427.7 281.9 427.9 282.0 436.6 285.5 C444.9 288.9 445.1 288.9 452.0 294.6 C458.3 299.7 458.5 299.8 462.6 306.8 C465.8 312.3 466.4 312.6 466.4 319.0 C466.4 325.3 465.6 325.5 462.6 331.0 C460.5 334.7 458.5 335.0 456.5 337.0 C453.4 334.6 451.7 333.4 447.0 329.7 C440.3 324.4 440.9 323.5 433.6 319.0 C424.8 313.6 424.7 313.6 415.0 310.0 C405.6 306.5 405.1 307.7 395.5 305.0 C390.8 303.7 389.3 303.0 386.3 302.0Z" fill="#a51d7b" stroke="#7d6c48" stroke-width="1.4"/>
<path d="M386.3 302 L395.5 290 L406 282.4 L412 281.5 L409 296 L408 306 L395.5 305 Z" fill="#541a63"/>
<path d="M409 296 L415 287.8 L433.6 290.8 L450 300 L415 303 Z" fill="#fbf6f8"/>
<path d="M415 303 L450 300 L458 305 L420 309 Z" fill="#7d1762" opacity=".8"/>
<path d="M473 346 L477 334 L478.5 322 L476 312" stroke="#f6f2e8" stroke-width="3" fill="none" opacity=".85"/>
<path d="M462 349 L467.5 356 L470.5 351 L466 342 Z" fill="#fdfdfb"/>
<path d="M132.6 375.3 C134.8 371.6 136.0 372.6 140.0 371.0 C143.2 369.7 143.8 367.8 146.7 369.6 C149.9 371.5 149.3 372.9 149.5 376.7 C149.9 384.2 148.5 387.0 148.0 392.0 C152.2 391.6 156.5 391.1 160.7 390.7 C161.6 395.3 162.2 397.7 163.5 404.7 C164.4 409.6 162.7 410.2 165.0 414.6 C169.1 422.5 167.7 425.3 176.0 428.6 C184.0 431.8 187.4 426.7 193.0 425.8 C193.9 428.5 194.9 431.3 195.8 434.0 C193.2 435.0 188.0 434.1 188.0 437.0 C188.0 439.9 193.7 438.3 195.8 442.6 C199.8 450.9 200.4 452.1 200.0 462.0 C199.7 469.5 193.2 468.6 194.4 476.0 C195.6 483.4 202.0 480.3 204.0 487.5 C205.9 494.4 198.5 495.0 201.4 501.5 C205.1 509.7 208.1 507.5 215.4 512.8 C221.5 517.2 223.9 514.7 228.0 521.0 C231.1 525.8 230.6 527.3 228.0 532.4 C225.1 538.2 223.9 538.0 218.0 540.8 C211.5 543.8 211.1 544.8 204.0 543.7 C192.2 541.8 191.4 542.0 181.7 535.0 C173.2 528.9 173.4 527.9 169.0 518.4 C165.4 510.7 169.6 509.4 166.3 501.6 C161.8 490.9 159.4 492.1 153.7 482.0 C147.5 471.1 144.3 471.9 142.5 459.5 C141.2 450.7 147.1 451.4 148.0 442.6 C149.2 431.3 149.3 431.0 146.7 420.0 C144.2 409.6 141.9 410.5 138.0 400.5 C134.8 392.3 134.4 392.1 132.6 383.7 C131.7 379.6 130.5 378.9 132.6 375.3Z" fill="url(#chromeG)"/>
<g filter="url(#b2)">
<path d="M134 377 L140 372 L147 371 L149 378 L148 391 L143 395 L138 388 Z" fill="#e9e4d6"/>
<path d="M136 379 L140 375 L143 376 L142 388 L139 386 Z" fill="#fbfaf6"/>
<path d="M146 372 L149 378 L148 392" stroke="#9c8f74" stroke-width="1.5" fill="none"/>
<path d="M140 402 L147 421 L148 442 L143 459 L154 482 L166 501 L169 518 L182 534 L204 543" stroke="#b1a58b" stroke-width="2.5" fill="none" opacity=".9"/>
<path d="M145 408 L152 428 L153 446 L149 460 L159 480 L171 500 L175 516 L187 530 L204 538" stroke="#f6f4ee" stroke-width="5" fill="none" opacity=".9"/>
<path d="M153 404 L158 424 L163 440 L160 458 L168 476 L179 496 L184 512 L196 526" stroke="#b4bcc8" stroke-width="4" fill="none" opacity=".85"/>
<path d="M160 398 L165 416 L172 432 L172 452 L177 470 L188 490 L193 506 L206 522 L216 532" stroke="#a39679" stroke-width="4.5" fill="none" opacity=".8"/>
<path d="M166 410 L172 424 L181 434 L182 452 L186 468 L196 486 L199 500 L212 514 L222 524 L222 532" stroke="#fbfaf7" stroke-width="5.5" fill="none" opacity=".95"/>
<path d="M176 428.6 L193 425.8 L195.8 434 L186 437.5 Z" fill="#d9d1bd"/>
<path d="M178 429.6 L192 427.4 L193 430 L180 432 Z" fill="#f6f2e8"/>
<path d="M190 440 L197 444 L200.5 462 L195 476 L204.5 488 L202 501.5 L216 513 L228.5 521 L228.5 532 L219 540" stroke="#8d8068" stroke-width="1.6" fill="none" opacity=".75"/>
<path d="M188 442 L194 447 L197.5 462 L192.5 476 L201.5 489 L199.5 502 L213.5 515 L225.5 522.5 L225.5 531 L217 538" stroke="#ffffff" stroke-width="2.6" fill="none" opacity=".95"/>
<path d="M170 520 L184 534 L205 542 L218 540" stroke="#ece7da" stroke-width="3" fill="none"/>
</g>
<path d="M844.6 387.6 L850 389 L854.7 397.8 L853 410 L846.6 413 L849 400 Z" fill="#cdbfa5"/>
<path d="M850 392 L853 399 L852 407" stroke="#f3eee2" stroke-width="1.5" fill="none"/>
<g fill="#fff" opacity=".9"><circle cx="651" cy="517" r="1"/><circle cx="563" cy="400" r="1"/><circle cx="617" cy="404" r="1"/><circle cx="645" cy="422" r="1"/><circle cx="543" cy="435" r="1"/><circle cx="744" cy="418" r="1"/><circle cx="292" cy="411" r="1.2"/></g>
<ellipse cx="635" cy="269" rx="4.5" ry="1.8" fill="#7e1967"/>
</g>
</svg>
<!-- thumbnails + row icons -->
<svg class="a" style="left:1019px;top:94px" width="132" height="420" viewBox="1019 94 132 420">
 <defs>
  <linearGradient id="arG" x1="0" y1="0" x2="1" y2="0"><stop offset="0" stop-color="#b5b5b5"/><stop offset=".45" stop-color="#8a8a8a"/><stop offset="1" stop-color="#3c3c3c"/></linearGradient>
  <g id="rowic">
   <text x="0" y="0" font-family="Liberation Sans, sans-serif" font-weight="bold" font-size="19.8" fill="#f41c0a" stroke="#ee1a0a" stroke-width="1" text-anchor="middle" transform="translate(1137 135.6) scale(1.5 1)">X</text>
   <path d="M1130 143.5 L1136 143.5 L1136 152.5 L1139.2 152.5 L1132.8 159.3 L1126.6 152.5 L1130 152.5 Z" fill="url(#arG)"/>
   <path d="M1140.9 146.3 h3.3 v2.7 h3.4 v3.2 h-3.4 v2.7 h-3.3 v-2.7 h-3.4 v-3.2 h3.4 z" fill="#3fe02c" stroke="#2bb81c" stroke-width=".5"/>
   <path d="M1142.1 147.4 h1 v2.7 h3 v1 h-3 v2.7 h-1 v-2.7 h-3 v-1 h3 z" fill="#a6f59a" opacity=".7"/>
  </g>
  <linearGradient id="t2b" x1="0" y1="0" x2="0" y2="1"><stop offset="0" stop-color="#cf3e9a"/><stop offset="1" stop-color="#b62a86"/></linearGradient>
  <linearGradient id="t4b" x1="0" y1="0" x2="1" y2="0"><stop offset="0" stop-color="#a79e8b"/><stop offset=".6" stop-color="#a29985"/><stop offset="1" stop-color="#b8b09e"/></linearGradient>
 </defs>
 <use href="#rowic"/><use href="#rowic" y="82"/><use href="#rowic" y="164"/><use href="#rowic" y="246"/><use href="#rowic" y="328"/>
 <!-- thumb 1 : same view as main -->
 <use href="#car" transform="translate(1014.1 88.4) scale(.1127)"/>
 <!-- thumb 2 : side view -->
 <g filter="url(#tb05)">
  <ellipse cx="1043.6" cy="224" rx="5.8" ry="5.6" fill="#1d1a1b"/><ellipse cx="1043.6" cy="224" rx="2.9" ry="2.9" fill="#f2eeee"/>
  <ellipse cx="1098.4" cy="224" rx="5.4" ry="5.2" fill="#1d1a1b"/><ellipse cx="1098.4" cy="224" rx="2.7" ry="2.7" fill="#f2eeee"/>
  <path d="M1028.6 215.5 C1029.5 210.5 1033 208.6 1040 208 L1056 207 C1058 203.8 1060.5 201.6 1064.5 200.8 C1072 199.6 1080 199.8 1086 201 C1091 202.2 1095 205 1100 208.4 C1106 211.4 1111 215.8 1113.4 220 L1112.8 223.6 L1104.6 224.8 C1104.2 220.4 1101.6 218.2 1098.4 218.2 C1095 218.2 1092.4 220.6 1092.2 225.2 L1050 225.6 C1049.8 220.6 1047 218 1043.6 218 C1040 218 1037.4 220.6 1037.2 225 L1031 224.4 L1029 221.5 Z" fill="url(#t2b)"/>
  <path d="M1063.4 210.2 C1064 207.6 1066 205.8 1069 205.6 L1073.4 205.4 L1073.4 209.6 Z M1076 205.2 L1085.6 205.2 L1085.8 208.8 L1076 209.4 Z M1088.4 205.8 C1091 206.2 1093.4 207.6 1095 209.6 L1088.6 209.4 Z" fill="#26060f"/>
  <path d="M1058 207 L1060.4 202.4" stroke="#efe6dc" stroke-width="1.3"/>
  <path d="M1031 212.6 C1040 210.6 1050 210 1061 210.2" stroke="#de6cbc" stroke-width="1" fill="none" opacity=".8"/>
  <path d="M1062 214 L1072 212.8 M1064 216.2 L1071 215.4" stroke="#ea8fd0" stroke-width=".8" fill="none"/>
  <path d="M1028.4 214 L1029.4 221" stroke="#e8e2d8" stroke-width="1.2"/>
  <path d="M1113 219.6 L1113.6 223" stroke="#e8e2d8" stroke-width="1"/>
 </g>
 <!-- thumb 3 : front view -->
 <g filter="url(#tb05)">
  <path d="M1059.4 286 C1059.6 280.4 1062 278 1066 277.6 L1079 277.6 C1083 278 1085 280.4 1085.4 286 L1085.8 291 C1089.6 293 1092 296.6 1092.4 301 L1092.6 311 L1053.2 311 L1053.2 301 C1053.6 296.6 1056 293 1059.6 291 Z" fill="#c93494"/>
  <path d="M1060 288.4 C1060.4 283.6 1063 281.8 1066.4 281.6 L1078.8 281.6 C1082 281.8 1084.4 283.6 1084.8 288.4 Z" fill="#d85aa6"/>
  <path d="M1062 285.4 C1066 283.8 1079 283.8 1083 285.4 L1082.6 287.8 C1078 286.6 1067 286.6 1062.4 287.8 Z" fill="#1d0a10"/>
  <path d="M1061 289.6 L1084 289.6" stroke="#ded6cc" stroke-width="1.2"/>
  <path d="M1055 298 C1062 294.4 1083 294.4 1091 298" stroke="#e684c4" stroke-width="1.6" fill="none" opacity=".8"/>
  <path d="M1054 307 C1054.4 304 1058 303.6 1062 304.4 C1066 304.8 1069 301.2 1073 301.2 C1077 301.2 1080 304.8 1084 304.4 C1088 303.6 1091.6 304 1092 307 L1092 314 C1086 317.6 1060 317.6 1054 314 Z" fill="#d2cdc6"/>
  <path d="M1056 308 L1090 308 M1057 311.4 L1089 311.4" stroke="#8e8a86" stroke-width="1.3" stroke-dasharray="3 2.4"/>
  <path d="M1056 313.4 C1064 315.6 1082 315.6 1090 313.4" stroke="#f4f2ee" stroke-width="1.6" fill="none"/>
  <path d="M1071 301.6 L1075 301.6 L1076 307 L1070 307 Z" fill="#f6f4f0"/>
 </g>
 <!-- thumb 4 : underside -->
 <g filter="url(#tb05)">
  <path d="M1033 365.6 C1050 364.2 1095 364.6 1112 368.4 L1112 372 L1033 370 Z" fill="#c23a9a"/>
  <path d="M1031 366.8 C1050 366 1085 366.4 1100 368 C1110 369 1116.4 372 1117.2 380 C1117.4 388 1114 393 1106 394.6 C1090 396.6 1050 397 1034 395.6 C1029.4 394.8 1027.8 390 1027.6 381 C1027.6 372 1028.6 367.6 1031 366.8 Z" fill="url(#t4b)"/>
  <path d="M1035 368.4 C1034.6 372 1037 374.6 1040 374.4 L1042 373 L1046 373 L1048 374.4 C1051 374.4 1052 371 1051.4 368.4 Z" fill="#36272a"/>
  <path d="M1036.4 393.4 C1036 390 1038.6 388.4 1041 389 L1043 390.4 L1046 390.4 L1048 389 C1051 388.6 1052.6 391 1052 394.6 L1046 396.8 L1040 396.4 Z" fill="#36272a"/>
  <path d="M1094 369.6 C1094 373.4 1097 374.6 1100 374.4 L1106 373.6 C1107.4 372 1107 370 1106 368.8 Z" fill="#36272a"/>
  <path d="M1092 393.8 C1092 390.6 1095 389.8 1098 390 L1104 390.4 C1105.4 392 1105 394 1104 395.4 L1097 396.4 Z" fill="#36272a"/>
  <path d="M1036 378 L1064 378 M1036 386 L1064 386" stroke="#8f8776" stroke-width=".6"/>
  <path d="M1058 370 L1058 394 M1086 370 L1086 394" stroke="#978f7e" stroke-width=".5" stroke-dasharray="1 10"/>
  <rect x="1092.6" y="372.6" width="3" height="3" fill="#f5f3ee"/>
  <path d="M1104 379 L1104 384 M1106 379 L1106 384" stroke="#6e675a" stroke-width=".7"/>
 </g>
 <filter id="tb05" x="-5%" y="-5%" width="110%" height="110%"><feGaussianBlur stdDeviation="0.45"/></filter>
</svg>
<!-- title-bar app icon -->
<svg class="a" style="left:7px;top:5px" width="19" height="18" viewBox="7 5 19 18">
 <path d="M12.4 7 L18 6.4 L19.2 8.2 L24.4 10 L20.6 21.4 L14 19 Z" fill="#e22bb8"/>
 <path d="M16 7.4 L19 8.4 L24 10.2 L21 19 L18 12 Z" fill="#c916a4"/>
 <path d="M8.4 9.6 L17.4 10.4 L19.8 20.6 L16.4 21.8 L9 18 Z" fill="#3a3d44"/>
 <circle cx="13.2" cy="16.4" r="5.1" fill="#f4f4fa"/>
 <circle cx="13.2" cy="16.4" r="4" fill="#1f1c86"/>
 <path d="M11.8 14.2 L15.6 16.4 L11.8 18.6 Z" fill="#fff"/>
</svg>
<!-- menu-bar document icon -->
<svg class="a" style="left:14px;top:30px" width="18" height="18" viewBox="14 30 18 18">
 <path d="M18 31.8 L25 31.8 L28.8 35.6 L28.8 45.6 L18 45.6 Z" fill="#fdfdfd" stroke="#b9bcc6" stroke-width=".8"/>
 <path d="M25 31.8 L25 35.6 L28.8 35.6" fill="#e4e6ee" stroke="#b9bcc6" stroke-width=".7"/>
 <path d="M19.4 32.8 h4 M19.4 34.2 h3" stroke="#d2d4dc" stroke-width=".7"/>
 <path d="M17.4 36.4 L22 36 L23 37 L27.6 38 L25 45 L20 44.4 Z" fill="#e12cb8"/>
 <path d="M22 37 L27.4 38.2 L25 44.6 L23.4 40 Z" fill="#b4129a"/>
 <rect x="17.6" y="45" width="11.4" height="1.2" fill="#d020ac"/>
 <circle cx="18.2" cy="42.4" r="3.3" fill="#f2f2fa"/>
 <circle cx="18.2" cy="42.4" r="2.6" fill="#1f1c86"/>
 <path d="M17.3 41 L19.8 42.4 L17.3 43.8 Z" fill="#fff"/>
</svg>
<!-- caption glyphs -->
<svg class="a" style="left:1085px;top:0" width="105" height="21" viewBox="1085 0 105 21">
 <rect x="1094.5" y="10.5" width="11" height="4" rx=".8" fill="#fdfdfd" stroke="#5c6b82" stroke-width="1"/>
 <rect x="1122" y="4.5" width="10.5" height="9" rx=".8" fill="#fdfdfd" stroke="#5c6b82" stroke-width="1"/>
 <rect x="1125" y="7.5" width="4.6" height="3" fill="#8ea9cb" stroke="#5c6b82" stroke-width="1"/>
 <text x="0" y="0" font-family="Liberation Sans, sans-serif" font-weight="bold" font-size="12.4" fill="#fbfbfb" stroke="#4a3236" stroke-width=".8" paint-order="stroke" text-anchor="middle" transform="translate(1164.6 14.4) scale(1.42 1)">X</text>
</svg>
<!-- mdi button glyphs -->
<svg class="a" style="left:1131px;top:31px" width="56" height="18" viewBox="1131 31 56 18">
 <rect x="1135.6" y="42" width="6.4" height="1.8" fill="#6c7890"/>
 <path d="M1156.5 37.5 h5 v4" fill="none" stroke="#6c7890" stroke-width="1.4"/>
 <rect x="1154.7" y="40.2" width="5" height="3.6" fill="none" stroke="#6c7890" stroke-width="1.4"/>
 <path d="M1174.4 36.8 L1180.6 43.6 M1180.6 36.8 L1174.4 43.6" stroke="#5e6a82" stroke-width="1.9"/>
</svg>
<!-- mouse cursor -->
<svg class="a" style="left:845px;top:506px" width="16" height="24" viewBox="845 506 16 24">
 <path d="M847.5 508.5 L847.5 524.4 L851.2 521 L853.8 526.6 L856.4 525.4 L854 519.8 L858.6 519.6 Z" fill="#fff" stroke="#1c1c28" stroke-width="1"/>
</svg>

</body>
</html>
